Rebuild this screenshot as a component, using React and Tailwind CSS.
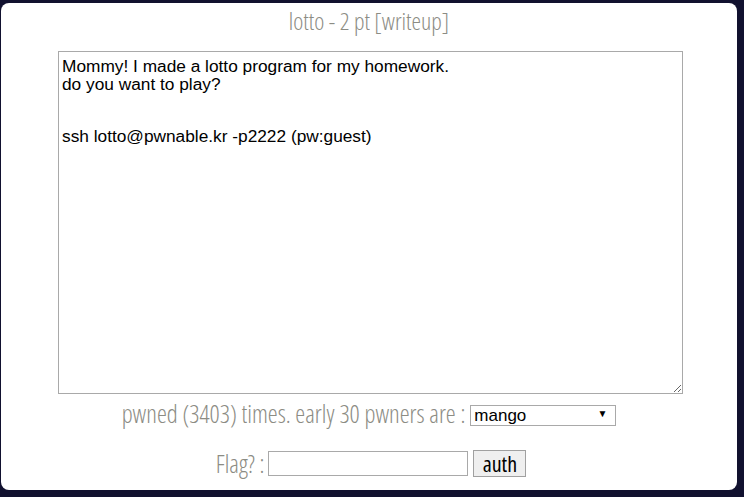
import React, { useState } from "react";

const LABEL_FONT = "font-['Open_Sans','DejaVu_Sans_Condensed',sans-serif]";
const BODY_FONT = "font-['Liberation_Sans',Arial,sans-serif]";

const pwners = ["mango", "cd80", "lucid", "hello", "m0nster"];

export default function App() {
  const [flag, setFlag] = useState("");
  const [pwner, setPwner] = useState(pwners[0]);

  return (
    <div className="h-[497px] w-[744px] overflow-hidden bg-[#11112f] pl-[1px] pt-[3px]">
      <div className="h-[487px] w-[736px] rounded-[8px] bg-white">
        <h1
          className={`${LABEL_FONT} pt-[3px] text-center text-[24px] font-light leading-[30px] text-[#8c8c84] font-stretch-condensed`}
        >
          lotto - 2 pt [writeup]
        </h1>

        <textarea
          readOnly
          className={`${BODY_FONT} ml-[57px] mt-[15px] block h-[343px] w-[625px] border border-[#a9a9a9] px-[3px] pt-[6px] text-[17.3px] leading-[17.5px] text-black outline-none`}
          defaultValue={
            "Mommy! I made a lotto program for my homework.\ndo you want to play?\n\n\nssh lotto@pwnable.kr -p2222 (pw:guest)"
          }
        />

        <div className="mt-[9px] flex h-[21px] items-center justify-center gap-[5px]">
          <span
            className={`${LABEL_FONT} text-[25px] font-light leading-[21px] text-[#8c8c84] font-stretch-condensed`}
          >
            pwned (3403) times. early 30 pwners are :
          </span>
          <div className="relative h-[21px] w-[146px]">
            <select
              value={pwner}
              onChange={(event) => setPwner(event.target.value)}
              className={`${BODY_FONT} h-full w-full appearance-none border border-[#a9a9a9] bg-white pl-[3px] text-[17px] leading-[19px] text-black outline-none`}
            >
              {pwners.map((name) => (
                <option key={name} value={name}>
                  {name}
                </option>
              ))}
            </select>
            <span className="pointer-events-none absolute right-[9px] top-[3px] text-[10px] text-black">
              ▼
            </span>
          </div>
        </div>

        <div className="mt-[26px] flex h-[27px] items-center justify-center gap-[4px] pl-[4px]">
          <span
            className={`${LABEL_FONT} text-[25px] font-light leading-[27px] text-[#8c8c84] font-stretch-condensed`}
          >
            Flag? :
          </span>
          <input
            value={flag}
            onChange={(event) => setFlag(event.target.value)}
            className={`${BODY_FONT} h-[25px] w-[200px] border border-[#a9a9a9] px-[2px] text-[16px] outline-none`}
          />
          <button
            type="button"
            className={`${LABEL_FONT} ml-[1px] h-[27px] w-[53px] border border-[#a0a0a0] bg-[#efefef] text-[22px] leading-[25px] text-black font-stretch-condensed`}
          >
            auth
          </button>
        </div>
      </div>
    </div>
  );
}
